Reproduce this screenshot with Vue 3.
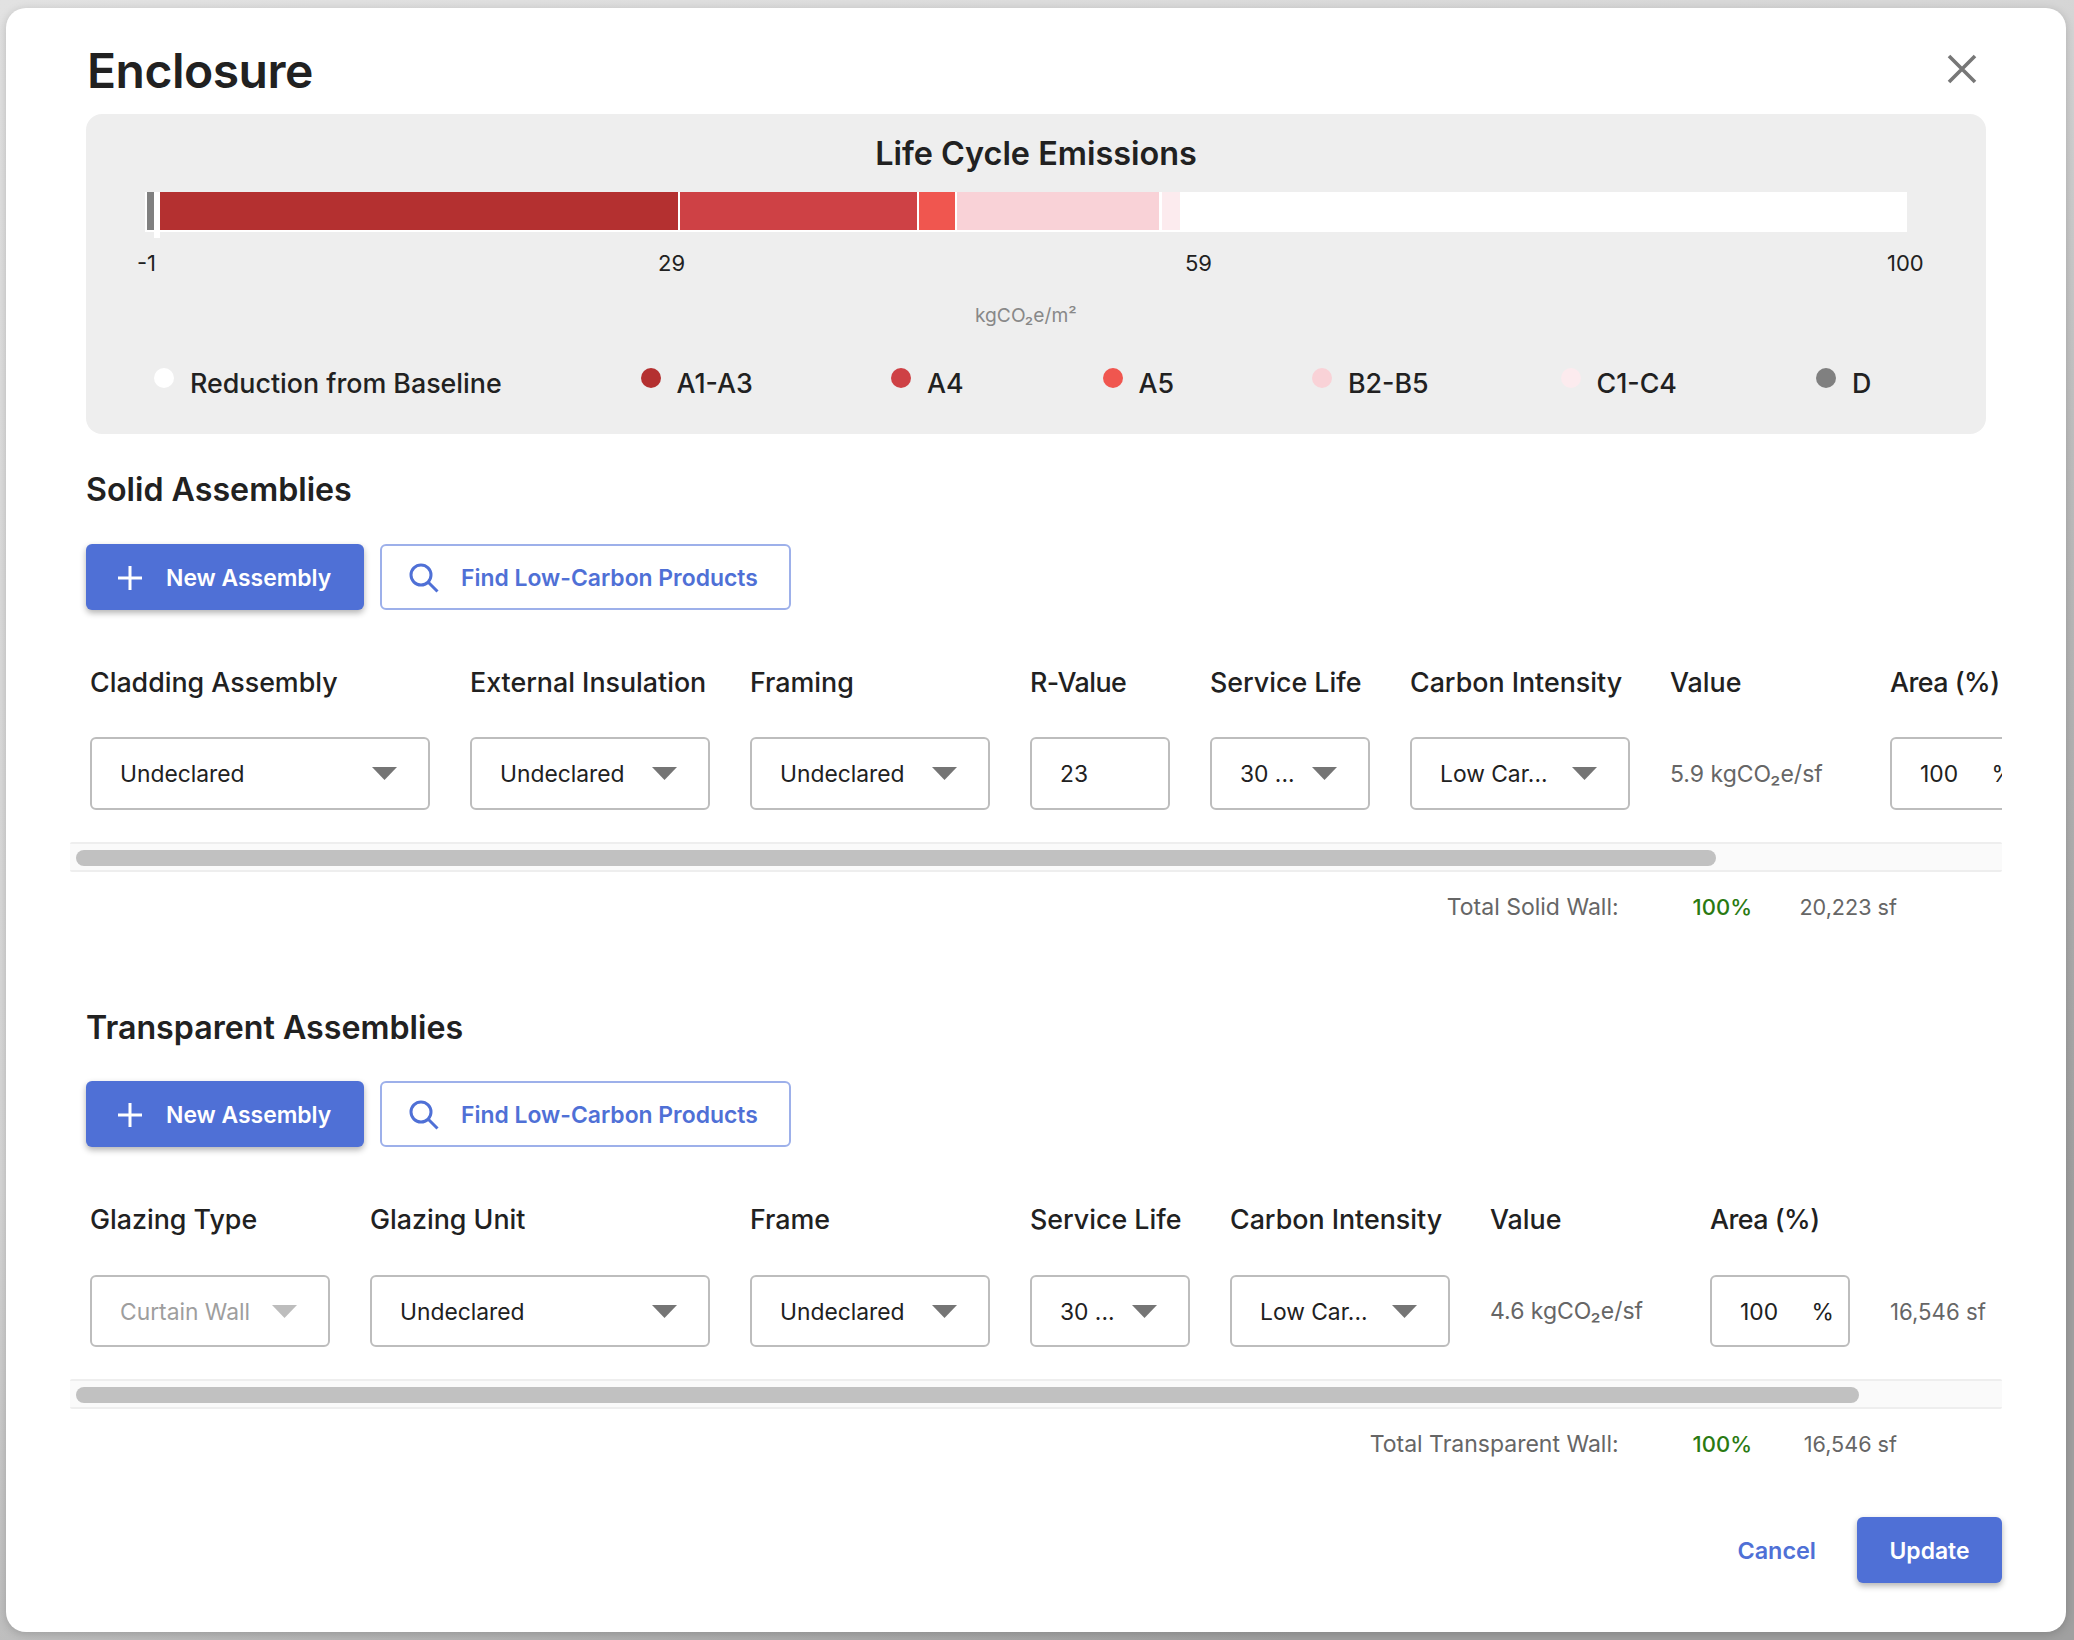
<script setup>
const legend = [
  { label: 'Reduction from Baseline', color: '#ffffff', width: 311 },
  { label: 'A1-A3', color: '#b43030', width: 75 },
  { label: 'A4', color: '#ce4145', width: 36 },
  { label: 'A5', color: '#f0564f', width: 34 },
  { label: 'B2-B5', color: '#f9d2d7', width: 73 },
  { label: 'C1-C4', color: '#fcebee', width: 80 },
  { label: 'D', color: '#808080', width: 18 }
]

const solidCols = [
  { title: 'Cladding Assembly', width: 340, type: 'select', text: 'Undeclared' },
  { title: 'External Insulation', width: 240, type: 'select', text: 'Undeclared' },
  { title: 'Framing', width: 240, type: 'select', text: 'Undeclared' },
  { title: 'R-Value', width: 140, type: 'input', text: '23', tight: true },
  { title: 'Service Life', width: 160, type: 'select', text: '30 ...' },
  { title: 'Carbon Intensity', width: 220, type: 'select', text: 'Low Car...' },
  { title: 'Value', width: 180, type: 'value', text: '5.9 kgCO₂e/sf' },
  { title: 'Area (%)', width: 140, type: 'percent', text: '100', tight: true }
]

const glassCols = [
  { title: 'Glazing Type', width: 240, type: 'select', text: 'Curtain Wall', disabled: true },
  { title: 'Glazing Unit', width: 340, type: 'select', text: 'Undeclared' },
  { title: 'Frame', width: 240, type: 'select', text: 'Undeclared' },
  { title: 'Service Life', width: 160, type: 'select', text: '30 ...' },
  { title: 'Carbon Intensity', width: 220, type: 'select', text: 'Low Car...' },
  { title: 'Value', width: 180, type: 'value', text: '4.6 kgCO₂e/sf' },
  { title: 'Area (%)', width: 140, type: 'percent', text: '100', tight: true },
  { title: '', width: 100, type: 'area', text: '16,546 sf' }
]

const sections = [
  { name: 'Solid Assemblies', cols: solidCols, thumb: 1640, totalLabel: 'Total Solid Wall:', total: '20,223 sf', cls: 'solid' },
  { name: 'Transparent Assemblies', cols: glassCols, thumb: 1783, totalLabel: 'Total Transparent Wall:', total: '16,546 sf', cls: 'glass' }
]
</script>

<template>
  <div class="modal">
    <div class="modal-head">
      <h1>Enclosure</h1>
      <svg class="close" width="30" height="30" viewBox="0 0 30 30">
        <path d="M2 2 L28 28 M28 2 L2 28" stroke="#777" stroke-width="3.6" fill="none" />
      </svg>
    </div>

    <!-- emissions chart -->
    <div class="chart">
      <div class="chart-title">Life Cycle Emissions</div>
      <div class="bar">
        <span class="seg" style="width: 7px; background: #808080; margin-left: 2px"></span>
        <span class="seg" style="width: 518px; background: #b43030; margin-left: 6px"></span>
        <span class="seg" style="width: 237px; background: #ce4145; margin-left: 2px"></span>
        <span class="seg" style="width: 36px; background: #f0564f; margin-left: 2px"></span>
        <span class="seg" style="width: 202px; background: #f9d2d7; margin-left: 2px"></span>
        <span class="seg" style="width: 18px; background: #fcebee; margin-left: 3px"></span>
        <i class="tick"></i>
      </div>
      <div class="scale">
        <span>-1</span><span>29</span><span>59</span><span>100</span>
      </div>
      <div class="unit">kgCO₂e/m²</div>
      <div class="legend">
        <div class="legend-item" v-for="l in legend" :key="l.label">
          <i class="dot" :style="{ background: l.color }"></i>
          <span :style="{ width: l.width + 'px' }">{{ l.label }}</span>
        </div>
      </div>
    </div>

    <div class="section" :class="s.cls" v-for="s in sections" :key="s.name">
      <h2>{{ s.name }}</h2>
      <div class="actions">
        <button class="btn primary">
          <svg width="24" height="24" viewBox="0 0 24 24"><path d="M12 0 V24 M0 12 H24" stroke="#fff" stroke-width="3" fill="none" /></svg>
          New Assembly
        </button>
        <button class="btn outline">
          <svg width="30" height="30" viewBox="0 0 30 30"><circle cx="12" cy="12" r="10" stroke="#4f70d6" stroke-width="3" fill="none" /><path d="M19 19 L28.5 28.5" stroke="#4f70d6" stroke-width="3" fill="none" /></svg>
          Find Low-Carbon Products
        </button>
      </div>

      <div class="table-scroll">
        <div class="row heads">
          <div class="head" :class="{ tight: c.tight }" v-for="c in s.cols" :key="c.title + c.width" :style="{ width: c.width + 'px' }">{{ c.title }}</div>
        </div>
        <div class="row fields">
          <div class="cell" v-for="c in s.cols" :key="c.title + c.width" :style="{ width: c.width + 'px' }">
            <div class="box" v-if="c.type === 'select'" :class="{ disabled: c.disabled }">
              <span>{{ c.text }}</span>
              <svg width="25" height="13" viewBox="0 0 25 13"><path d="M0 0 H25 L12.5 13 Z" :fill="c.disabled ? '#bdbdbd' : '#757575'" /></svg>
            </div>
            <div class="box" v-else-if="c.type === 'input'"><span>{{ c.text }}</span></div>
            <div class="box percent" v-else-if="c.type === 'percent'"><span>{{ c.text }}</span><span>%</span></div>
            <div class="value" :class="{ area: c.type === 'area' }" v-else>{{ c.text }}</div>
          </div>
        </div>
      </div>
      <div class="track"><div class="thumb" :style="{ width: s.thumb + 'px' }"></div></div>

      <div class="total">
        <span class="total-label">{{ s.totalLabel }}</span>
        <span class="pct">100%</span>
        <span class="total-area">{{ s.total }}</span>
      </div>
    </div>

    <div class="footer">
      <span class="cancel">Cancel</span>
      <button class="btn primary update">Update</button>
    </div>
  </div>
</template>

<style scoped>
.modal {
  position: relative;
  box-sizing: border-box;
  width: 2060px;
  height: 1624px;
  margin: 8px 0 0 6px;
  padding: 0 64px 0 80px;
  background: #fff;
  border-radius: 20px;
  font-family: Inter, "Liberation Sans", sans-serif;
  color: #212121;
  box-shadow: 0 2px 10px rgba(0, 0, 0, 0.18);
}
/* the dialog underneath, only its shadow shows */
.modal::before {
  content: '';
  position: absolute;
  z-index: -1;
  left: 1324px;
  right: 0;
  top: 0;
  bottom: 0;
  border-radius: 20px;
  box-shadow: 0 3px 12px rgba(0, 0, 0, 0.55);
}
.modal-head { display: flex; justify-content: space-between; align-items: center; box-sizing: border-box; height: 106px; padding: 18px 25px 0 0; }
h1 { margin: 0 0 0 1px; font-size: 48px; font-weight: 600; letter-spacing: -0.5px; }
.close { margin-top: -2px; }

.chart { width: 1900px; height: 320px; background: #eee; border-radius: 16px; overflow: hidden; }
.chart-title { margin-top: 18px; margin-bottom: 16px; text-align: center; font-size: 32.4px; font-weight: 600; line-height: 44px; }
.bar { position: relative; display: flex; box-sizing: border-box; width: 1762px; height: 40px; margin-left: 59px; background: #fff; padding-bottom: 2px; }
.seg { display: block; height: 38px; flex: none; }
.tick { position: absolute; left: 9px; top: 38px; width: 6px; height: 8px; background: #fff; }
.scale { position: relative; height: 30px; margin-top: 16px; font-size: 22px; line-height: 30px; }
.scale span { position: absolute; }
.scale span:nth-child(1) { left: 51px; }
.scale span:nth-child(2) { left: 572px; }
.scale span:nth-child(3) { left: 1099px; }
.scale span:nth-child(4) { left: 1801px; }
.unit { margin-top: 25px; padding-left: 889px; font-size: 19.2px; line-height: 24px; color: #888; }
.legend { display: flex; gap: 139.5px; margin-top: 37px; padding-left: 68px; }
.legend-item { display: flex; gap: 16px; font-size: 26.8px; line-height: 38px; font-weight: 500; white-space: nowrap; }
.dot { width: 20px; height: 20px; border-radius: 50%; flex: none; margin-top: 4px; }

h2 { margin: 0; font-size: 32.2px; font-weight: 600; line-height: 44px; }
.solid { height: 538px; margin-top: 34px; }
.actions { display: flex; gap: 16px; }
.solid .actions { margin-top: 32px; }
.glass .actions { margin-top: 31px; }
.btn { display: inline-flex; align-items: center; box-sizing: border-box; height: 66px; padding-top: 2px; border-radius: 6px; font: 600 22.9px Inter, "Liberation Sans", sans-serif; }
.primary { border: 0; background: #4f70d6; color: #fff; box-shadow: 0 3px 6px rgba(0, 0, 0, 0.3); }
.actions .primary { width: 278px; gap: 24px; padding-left: 32px; }
.outline { width: 411px; gap: 22px; padding-left: 27px; background: #fff; border: 2px solid #9db0ea; color: #4f70d6; }

.table-scroll { width: 1912px; margin-left: 4px; overflow: hidden; }
.row { display: flex; gap: 40px; width: 2400px; }
.heads { margin-top: 54px; }
.head { flex: none; font-size: 26.8px; font-weight: 500; line-height: 36px; }
.head.tight { letter-spacing: -0.5px; }
.solid .fields { margin-top: 37px; }
.glass .fields { margin-top: 38px; }
.cell { flex: none; display: flex; align-items: center; height: 73px; }
.glass .cell { height: 72px; }
.box { display: flex; align-items: center; justify-content: space-between; width: 100%; height: 100%; box-sizing: border-box; padding: 0 31px 0 28px; border: 2px solid #bdbdbd; border-radius: 6px; font-size: 22.8px; background: #fff; }
.box.disabled { color: #9e9e9e; }
.box.percent { padding-right: 14px; }
.value { font-size: 23px; color: #666; white-space: nowrap; }
.value.area { font-size: 22.2px; }

.track { box-sizing: border-box; width: 1932px; height: 30px; margin: 32px 0 0 -16px; padding: 6px; border-top: 2px solid #eee; border-bottom: 2px solid #eee; background: #fafafa; border-radius: 2px; }
.thumb { height: 16px; background: #c1c1c1; border-radius: 8px; }

.total { display: flex; width: 1811px; justify-content: flex-end; align-items: center; height: 40px; margin-top: 15px; font-size: 21.6px; color: #666; }
.total-label { margin-right: 74px; font-size: 23px; }
.pct { margin-right: 47px; color: #2a7a12; font-weight: 500; font-size: 22px; }
.total-area { min-width: 98px; text-align: right; }

.footer { display: flex; justify-content: flex-end; align-items: center; gap: 41px; margin-top: 53px; }
.cancel { font-size: 23.4px; font-weight: 600; color: #4f70d6; }
.update { width: 145px; justify-content: center; }
</style>

<style>
html, body {
  min-height: 100%;
  background: linear-gradient(150deg, #e2e2e2 0%, #d6d6d6 42%, #bebebe 58%, #a0a0a0 84%);
}
body { height: 1640px; overflow: hidden; }
</style>
